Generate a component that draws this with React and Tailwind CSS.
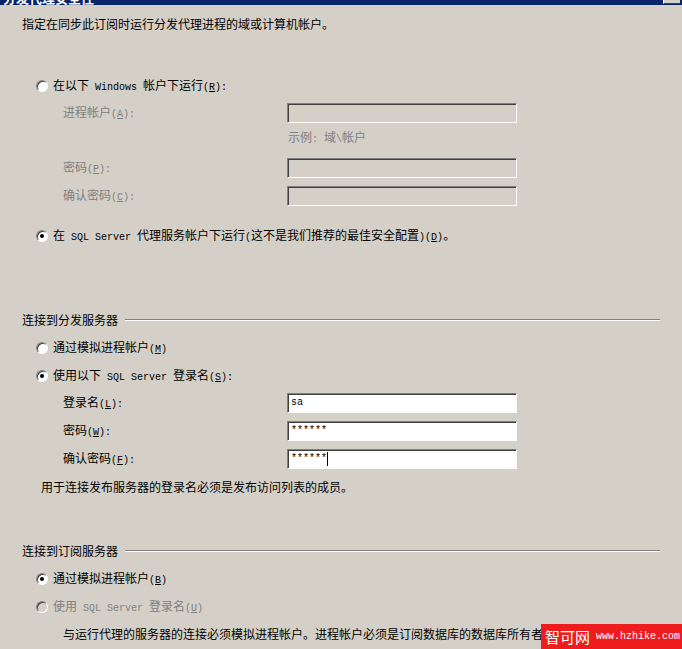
const cjk = "font-['Noto_Sans_CJK_SC','Noto_Sans',sans-serif]";

function T({ s, className = "" }) {
  // "&X" marks a mnemonic letter; ASCII runs use a narrow mono face like SimSun's latin half
  const parts = [];
  let buf = "";
  let ascii = null;
  const flush = () => {
    if (!buf) return;
    parts.push(
      <span key={parts.length} className={ascii ? "font-['Liberation_Mono',monospace] text-[10px]" : ""}>
        {buf}
      </span>
    );
    buf = "";
  };
  for (let i = 0; i < s.length; i++) {
    let ch = s[i];
    if (ch === "&") {
      flush();
      ch = s[++i];
      parts.push(
        <span key={parts.length} className="font-['Liberation_Mono',monospace] text-[10px] underline">
          {ch}
        </span>
      );
      ascii = null;
      continue;
    }
    const isAscii = ch.charCodeAt(0) < 128;
    if (ascii !== null && isAscii !== ascii) flush();
    ascii = isAscii;
    buf += ch;
  }
  flush();
  return <span className={`whitespace-pre ${className}`}>{parts}</span>;
}

function Radio({ checked, disabled }) {
  return (
    <span
      className={`relative inline-flex w-3 h-3 shrink-0 rounded-full border border-t-[#808080] border-l-[#808080] border-r-white border-b-white shadow-[inset_1px_1px_0_#404040] ${
        disabled ? "bg-[#d4d0c8]" : "bg-white"
      }`}
    >
      {checked && <span className="absolute left-[3px] top-[3px] w-1 h-1 rounded-full bg-black" />}
    </span>
  );
}

function RadioRow({ label, checked, disabled, className = "" }) {
  return (
    <div className={`flex items-center h-[14px] pl-9 gap-[5px] ${className}`}>
      <Radio checked={checked} disabled={disabled} />
      <T s={label} className={disabled ? "text-[#808080]" : "text-black"} />
    </div>
  );
}

function Field({ label, value, disabled, caret, className = "" }) {
  return (
    <div className={`flex items-center h-5 ${className}`}>
      <div className={`w-[287px] shrink-0 pl-[63px] ${disabled ? "text-[#808080]" : "text-black"}`}>
        <T s={label} />
      </div>
      <div
        className={`w-[230px] h-5 border border-t-[#808080] border-l-[#808080] border-r-white border-b-white shadow-[inset_1px_1px_0_#404040] flex items-center pl-[3px] ${
          disabled ? "bg-[#d4d0c8]" : "bg-white"
        }`}
      >
        <span className="font-['Liberation_Mono',monospace] text-[10px] leading-none text-black">{value}</span>
        {caret && <span className="w-px h-[14px] bg-black" />}
      </div>
    </div>
  );
}

function Group({ title, className = "" }) {
  return (
    <div className={`flex items-center h-[14px] pl-[22px] pr-[22px] gap-[7px] ${className}`}>
      <T s={title} />
      <div className="flex-1 h-[2px] border-t border-t-[#808080] border-b border-b-white" />
    </div>
  );
}

export default function App() {
  return (
    <div className={`relative w-[682px] h-[649px] overflow-hidden bg-[#d4d0c8] text-[12px] leading-[14px] text-black ${cjk}`}>
      <div className="relative h-[5px] overflow-hidden bg-[#0a246a]">
        <div className="absolute left-[3px] -top-[9px] text-white font-bold text-[13px]">分发代理安全性</div>
        <div className="absolute right-[2px] top-0 w-[17px] h-[4px] bg-[#d4d0c8] border-l border-l-white border-b border-b-[#404040]" />
      </div>

      <div className="mt-3 pl-[22px] h-[14px]">
        <T s="指定在同步此订阅时运行分发代理进程的域或计算机帐户。" />
      </div>

      <RadioRow className="mt-12" label="在以下 Windows 帐户下运行(&R):" />
      <Field className="mt-[10px]" label="进程帐户(&A):" disabled />
      <div className="mt-[7px] h-[14px] pl-[288px] text-[#808080]">
        <T s="示例: 域\帐户" />
      </div>
      <Field className="mt-[14px]" label="密码(&P):" disabled />
      <Field className="mt-2" label="确认密码(&C):" disabled />

      <RadioRow className="mt-[23px]" label="在 SQL Server 代理服务帐户下运行(这不是我们推荐的最佳安全配置)(&D)。" checked />

      <Group className="mt-[70px]" title="连接到分发服务器" />
      <RadioRow className="mt-[14px]" label="通过模拟进程帐户(&M)" />
      <RadioRow className="mt-[14px]" label="使用以下 SQL Server 登录名(&S):" checked />
      <Field className="mt-[10px]" label="登录名(&L):" value="sa" />
      <Field className="mt-2" label="密码(&W):" value="******" />
      <Field className="mt-2" label="确认密码(&F):" value="******" caret />
      <div className="mt-[11px] h-[14px] pl-[41px]">
        <T s="用于连接发布服务器的登录名必须是发布访问列表的成员。" />
      </div>

      <Group className="mt-[50px]" title="连接到订阅服务器" />
      <RadioRow className="mt-[14px]" label="通过模拟进程帐户(&B)" checked />
      <RadioRow className="mt-[14px]" label="使用 SQL Server 登录名(&U)" disabled />
      <div className="mt-[13px] h-[14px] pl-[63px] whitespace-nowrap">
        <T s="与运行代理的服务器的连接必须模拟进程帐户。进程帐户必须是订阅数据库的数据库所有者。" />
      </div>

      <div className="absolute left-[541px] top-[624px] w-[141px] h-[25px] bg-[#ee1c1c] flex items-center pl-[4px] gap-[6px] text-white whitespace-nowrap">
        <span className="text-[15px] leading-none shrink-0">智可网</span>
        <span className="font-['Liberation_Mono',monospace] text-[10px] leading-none shrink-0">www.hzhike.com</span>
      </div>
    </div>
  );
}
